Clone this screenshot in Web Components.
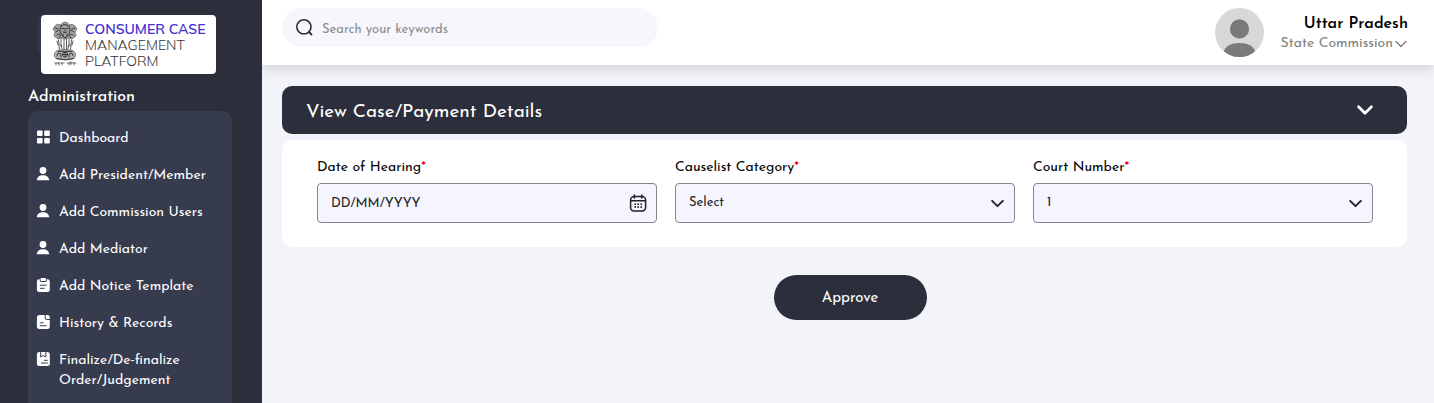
<!DOCTYPE html>
<html lang="en">
<head>
<meta charset="utf-8">
<meta name="viewport" content="width=device-width, initial-scale=1">
<title>Consumer Case Management Platform</title>
<style>
  body { margin: 0; background: #f3f4fa; font-family: "Josefin Sans", Lato, sans-serif; font-size: 14px; line-height: 20px; color: #000; --ink: #2c2f3b; --panel: #373b4e; --field: #f5f5ff; }
</style>
</head>
<body>
<cc-app>
  <cc-sidebar slot="sidebar" heading="Administration">
    <cc-brand slot="brand"></cc-brand>
    <cc-nav-item icon="grid">Dashboard</cc-nav-item>
    <cc-nav-item icon="user">Add President/Member</cc-nav-item>
    <cc-nav-item icon="user">Add Commission Users</cc-nav-item>
    <cc-nav-item icon="user">Add Mediator</cc-nav-item>
    <cc-nav-item icon="clipboard">Add Notice Template</cc-nav-item>
    <cc-nav-item icon="document">History &amp; Records</cc-nav-item>
    <cc-nav-item icon="order">Finalize/De-finalize Order/Judgement</cc-nav-item>
  </cc-sidebar>
  <cc-topbar slot="top">
    <span slot="name">Uttar Pradesh</span>
    <span slot="role">State Commission</span>
  </cc-topbar>
  <cc-section heading="View Case/Payment Details">
    <cc-field type="date" label="Date of Hearing" value="DD/MM/YYYY"></cc-field>
    <cc-field type="select" label="Causelist Category" value="Select"></cc-field>
    <cc-field type="select" label="Court Number" value="1"></cc-field>
  </cc-section>
  <cc-actions><cc-button>Approve</cc-button></cc-actions>
</cc-app>

<script>
const define = (name, render) => customElements.define(name, class extends HTMLElement {
  constructor() { super(); this.attachShadow({ mode: "open" }); }
  connectedCallback() {
    const t = document.createElement("template");
    t.innerHTML = render(this);
    this.shadowRoot.replaceChildren(t.content.cloneNode(true));
  }
});

const icons = {
  grid: ["0 0 14 14", `<g fill="currentColor"><rect x="1" y="0.500" width="5.600" height="5.600" rx="1"/><rect x="8.200" y="0.500" width="5.600" height="5.600" rx="1"/><rect x="1" y="7.900" width="5.600" height="5.600" rx="1"/><rect x="8.200" y="7.900" width="5.600" height="5.600" rx="1"/></g>`],
  user: ["0 0 14 14", `<g fill="currentColor"><circle cx="7" cy="3.500" r="3.400"/><path d="M.8 13.200C.9 10.300 3.500 8.300 7 8.300s6 2 6.200 4.900z"/></g>`],
  clipboard: ["0 0 14 14", `<path fill="currentColor" d="M2.800 1.300H3.700V2.200Q3.700 3.900 5.400 3.900H9.200Q10.900 3.900 10.900 2.200V1.300H11.600Q13.800 1.300 13.800 3.500V11.800Q13.800 14 11.600 14H3.100Q.9 14 .9 11.800V3.500Q.9 1.300 2.800 1.300z"/><rect x="4.500" y="0" width="5.600" height="3" rx="1" fill="currentColor"/><path d="M4.300 7.200h6M4.300 10.300h4" stroke="#373a4f" stroke-linecap="round"/>`],
  document: ["0 0 14 14", `<path fill="currentColor" d="M3.200 0H8.700V2.600Q8.700 5 11.100 5H13.800V11.500Q13.800 14 11.300 14H3.400Q.9 14 .9 11.500V2.500Q.9 0 3.200 0z"/><path fill="currentColor" d="M9.700 0H11.400Q13.800 0 13.800 2.400V4H11.200Q9.700 4 9.700 2.600z"/><path d="M4.200 7.800h3M4.200 10.700h6" stroke="#373a4f" stroke-linecap="round"/>`],
  order: ["0 0 14 14", `<rect x=".9" width="12.900" height="14" rx="2.500" fill="currentColor"/><path d="M4.700 0v5L7.300 3.500 9.900 5V0" fill="none" stroke="#373a4f"/><path d="M8.400 8.300h3M5.400 11h6" stroke="#373a4f" stroke-linecap="round"/>`],
  search: ["0 0 18 18", `<circle cx="7.900" cy="7.900" r="7.100" fill="none" stroke="currentColor" stroke-width="1.600"/><path d="m13.500 13.500 2 2" stroke="currentColor" stroke-width="1.800" stroke-linecap="round"/>`],
  chevron: ["0 0 14 14", `<path d="m2 4.500 5 5 5-5" fill="none" stroke="currentColor" stroke-linecap="round" stroke-linejoin="round" style="stroke-width:var(--stroke,1.8)"/>`],
  calendar: ["0 0 18 18", `<g fill="none" stroke="currentColor" stroke-width="1.500" stroke-linecap="round"><rect x="1.600" y="2.500" width="15" height="14.500" rx="3.500"/><path d="M1.800 6.800h14.600M5.400 1v3M12.800 1v3"/></g><g fill="currentColor"><circle cx="6.200" cy="10.200" r=".9"/><circle cx="9.200" cy="10.200" r=".9"/><circle cx="12.200" cy="10.200" r=".9"/><circle cx="6.200" cy="13" r=".9"/><circle cx="9.200" cy="13" r=".9"/><circle cx="12.200" cy="13" r=".9"/></g>`],
  avatar: ["0 0 48 48", `<defs><clipPath id="c"><circle cx="24" cy="24" r="24"/></clipPath></defs><g clip-path="url(#c)"><path fill="#d8d8d8" d="M0 0h48v48H0z"/><circle cx="24" cy="20.500" r="9.400" fill="#7a7a7a"/><path fill="#7a7a7a" d="M8 44C10 37 16 34.300 24 34.300S38 37 40 44v6H8z"/></g>`],
  emblem: ["0 0 26 46", `<g fill="none" stroke="#333" stroke-width=".9" stroke-linecap="round">
    <path fill="#a0a0a0" stroke-width=".5" d="M9 4Q10 1 13 1t4 3q4-2 6 1l2 3-2 3 1 4-4 3-3-1-4 1-4-1-3 1-4-3 1-4-2-3 2-3q2-3 6-1z"/>
    <path d="M9.500 5q3.500-3 7 0M10 7.500h2M14 7.500h2M11 11q2 1.500 4 0M13 8v2M9 5q-2 5 0 8l4 4 4-4q2-3 0-8M3 7l3 1M23 7l-3 1M4 11l3-2M22 11l-3-2M5 14l3-1M21 14l-3-1M7 17l2-3M19 17l-2-3M11 13v3M15 13v3"/>
    <path stroke-width=".8" d="M6.500 19 7.500 29M9 18v6l1.500 5M12 18v11M14.500 18v11M17 18v6l-1.500 5M19.500 19l-1 10M8 24l2 1M18 24l-2 1M5 20l1 4M21 20l-1 4"/>
    <path fill="#b0b0b0" stroke-width=".5" d="M5 29.500Q13 27.500 21 29.500l2.500 3v3L21 38Q13 40 5 38l-2.500-2.500v-3z"/>
    <circle cx="13" cy="33.500" r="2.500"/><path d="M13 31v5M10.500 33.500h5M5 35l1-3 3 1v3M21 35l-1-3-3 1v3M4 37.500q9 2.500 18 0M6 30.500h14"/>
    <path stroke-width=".7" d="M3 42h9M15 42h9M4 42v2M6.500 42v1.500l1 .500M10 42v2M17 42v2M19 42v1.500M22 42v2M18 40.700l1 .600"/></g>`]
};
define("cc-icon", el => {
  const [box, body] = icons[el.getAttribute("name")];
  return `<style>:host{display:block;flex:none;width:14px;height:14px}svg{display:block;width:100%;height:100%}</style><svg viewBox="${box}" aria-hidden="true">${body}</svg>`;
});

define("cc-app", () => `
<style>
  :host{display:grid;grid-template-columns:262px minmax(0,1fr);min-height:100vh}
  .page{display:flex;flex-direction:column;min-width:0}
  main{display:flex;flex-direction:column;gap:28px;padding:21px 27px 24px 20px}
</style>
<slot name="sidebar"></slot>
<div class="page"><slot name="top"></slot><main><slot></slot></main></div>`);

define("cc-sidebar", el => `
<style>
  :host{display:flex;flex-direction:column;background:var(--ink);color:#fff;padding:15px 30px 0 28px}
  h2{margin:13px 0 4px;font-size:16px;font-weight:500;line-height:20px}
  nav{flex:1;display:flex;flex-direction:column;gap:17px;background:var(--panel);border-radius:10px 10px 0 0;padding:18px 8px 14px}
</style>
<slot name="brand"></slot><h2>${el.getAttribute("heading")}</h2>
<nav aria-label="${el.getAttribute("heading")}"><slot></slot></nav>`);

define("cc-brand", () => `
<style>
  :host{display:block;position:relative;z-index:0;margin:0 16px 0 13px}
  :host::before{content:"";position:absolute;z-index:-1;left:-4px;top:-2px;width:40px;height:45px;border-radius:10px;background:#32354a}
  a{display:flex;gap:7px;align-items:flex-start;box-sizing:border-box;height:59px;padding:6px 0 0 11px;background:#fff;border-radius:4px;color:#333;text-decoration:none;font:14px/16px Mulish,Muli,Lato,sans-serif;white-space:nowrap}
  cc-icon{width:26px;height:46px}
  strong,span{display:block}
  strong{color:#4534ce;font-weight:600}
  span{font-weight:300}
</style>
<a href="#"><cc-icon name="emblem"></cc-icon><div><strong>CONSUMER CASE</strong><span>MANAGEMENT</span><span>PLATFORM</span></div></a>`);

define("cc-nav-item", el => `
<style>
  :host{display:block}
  a{display:flex;gap:9px;color:#fff;text-decoration:none;font-size:14px;line-height:20px}
  cc-icon{margin-top:1px}
</style>
<a href="#"><cc-icon name="${el.getAttribute("icon")}"></cc-icon><span><slot></slot></span></a>`);

define("cc-topbar", () => `
<style>
  :host{display:flex;justify-content:space-between;align-items:flex-start;gap:24px;box-sizing:border-box;height:65px;background:#fff;padding:8px 26px 0 20px;box-shadow:0 3px 12px rgba(0,0,0,.16);clip-path:inset(0 0 -20px 0)}
  .search{display:flex;align-items:center;gap:8px;box-sizing:border-box;flex:0 1 376px;height:39px;padding:0 14px;border-radius:20px;background:#f6f6fc;color:#2c2e3b}
  .search cc-icon{width:18px;height:18px}
  input{flex:1;min-width:0;border:0;padding:4px 0 0;background:none;outline:none;font:inherit;font-size:13px;color:#333}
  input::placeholder{color:#8b8b8b;opacity:1}
  .user{display:flex;align-items:center;gap:17px;border:0;padding:0;background:none;font:inherit;text-align:right;white-space:nowrap}
  .avatar{width:49px;height:49px}
  .text{padding-top:1px}
  .name{font-size:16px;font-weight:600;line-height:22px;color:#000}
  .role{display:flex;align-items:center;justify-content:flex-end;gap:1px;font-size:14px;line-height:18px;color:#808080}
  .role cc-icon{--stroke:1.4}
</style>
<label class="search"><cc-icon name="search"></cc-icon><input type="search" placeholder="Search your keywords" aria-label="Search"></label>
<button class="user" type="button"><cc-icon class="avatar" name="avatar"></cc-icon>
<span class="text"><div class="name"><slot name="name"></slot></div><div class="role"><slot name="role"></slot><cc-icon name="chevron"></cc-icon></div></span></button>`);

define("cc-section", el => `
<style>
  :host{display:flex;flex-direction:column;gap:6px}
  h1{margin:0;font:inherit}
  button{display:flex;align-items:center;justify-content:space-between;width:100%;height:48px;border:0;border-radius:10px;padding:0 33px 0 24px;background:var(--ink);color:#fff;font:inherit;font-size:19px}
  span{padding-top:6px}
  cc-icon{width:18px;height:18px;--stroke:2.1}
  form{display:grid;grid-template-columns:repeat(3,minmax(0,1fr));gap:18px;background:#fff;border-radius:10px;padding:18px 34px 24px 35px}
</style>
<h1><button type="button" aria-expanded="true"><span>${el.getAttribute("heading")}</span><cc-icon name="chevron"></cc-icon></button></h1>
<form><slot></slot></form>`);

define("cc-field", el => {
  const value = el.getAttribute("value");
  const date = el.getAttribute("type") === "date";
  return `
<style>
  :host{display:flex;flex-direction:column;gap:5px}
  label{font-size:14px;line-height:20px}
  i{color:#f00016;font-style:normal}
  .box{display:grid;grid-template-columns:minmax(0,1fr);align-items:center;border:1px solid #85858f;border-radius:4px;background:var(--field);height:38px;color:#222}
  .box>*{grid-area:1/1}
  input,select{appearance:none;box-sizing:border-box;width:100%;height:38px;border:0;padding:0 40px 0 13px;background:none;outline:none;font:inherit;font-size:13px;color:#222}
  input::placeholder{color:#222;opacity:1}
  button{justify-self:end;border:0;margin:0 9px 0 0;padding:0;background:none;color:#222}
  button cc-icon{width:18px;height:18px}
  .arrow{justify-self:end;margin-right:9px;width:15px;height:15px;pointer-events:none}
</style>
<label for="f">${el.getAttribute("label")}<i>*</i></label>
<div class="box">${date
  ? `<input id="f" type="text" placeholder="${value}"><button type="button" aria-label="Choose date"><cc-icon name="calendar"></cc-icon></button>`
  : `<select id="f"><option>${value}</option></select><cc-icon class="arrow" name="chevron"></cc-icon>`}</div>`;
});

define("cc-actions", () => `<style>:host{display:flex;justify-content:center;margin-right:-11px}</style><slot></slot>`);
define("cc-button", () => `
<style>
  :host{display:block}
  button{min-width:153px;height:45px;border:0;border-radius:23px;padding:2px 24px 0;background:var(--ink);color:#fff;font:inherit;font-size:15px}
</style>
<button type="button"><slot></slot></button>`);
</script>
</body>
</html>
